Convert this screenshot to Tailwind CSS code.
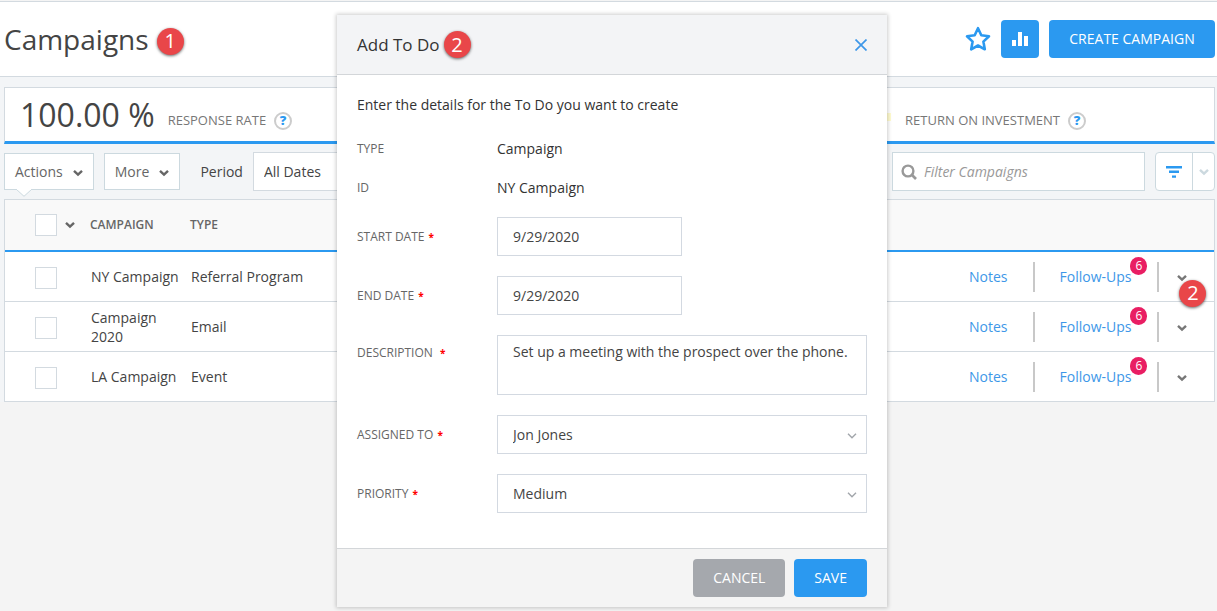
<!DOCTYPE html>
<html lang="en">
<head>
<meta charset="utf-8">
<meta name="viewport" content="width=device-width, initial-scale=1">
<title>Campaigns</title>
<script src="https://cdn.jsdelivr.net/npm/@tailwindcss/browser@4"></script>
</head>
<body class="relative min-h-screen bg-[#f4f4f4] font-['Open_Sans',sans-serif] text-sm text-[#444]">
<svg class="hidden">
  <symbol id="chevron" viewBox="0 0 10 8"><path d="M1 1.8 5 5.6 9 1.8" fill="none" stroke="currentColor" stroke-width="2.4"/></symbol>
  <symbol id="chevron-thin" viewBox="0 0 10 6"><path d="M1 .8 5 4.8 9 .8" fill="none" stroke="currentColor" stroke-width="1.4"/></symbol>
</svg>

<header class="mt-px flex h-[76px] items-center justify-between border-y border-[#d3dae0] bg-white pr-0.5 pl-1">
  <div class="flex items-center gap-2">
    <h1 class="text-[28px] leading-9">Campaigns</h1>
    <span class="mt-1 flex size-[27px] items-center justify-center rounded-full bg-[#e94649] text-xl leading-none text-white shadow-[0_1px_3px_rgba(0,0,0,0.6)]">1</span>
  </div>
  <div class="flex items-center gap-2.5">
    <button type="button" aria-label="Add to favorites" class="text-[#2b99f0]">
      <svg class="size-[26px]" viewBox="0 0 26 26"><path d="M13 2.2 16.3 9.3 24 10.3 18.4 15.6 19.8 23.3 13 19.5 6.2 23.3 7.6 15.6 2 10.3 9.7 9.3Z" fill="none" stroke="currentColor" stroke-width="2.6" stroke-linejoin="round"/></svg>
    </button>
    <button type="button" aria-label="Charts" class="flex size-[38px] items-center justify-center rounded bg-[#2b99f0] text-white">
      <svg class="h-[15px] w-4" viewBox="0 0 16 15"><path d="M0 8h4v6H0zM6 0h4v14H6zM12 4h4v10h-4z" fill="currentColor"/></svg>
    </button>
    <button type="button" class="h-[38px] w-[166px] rounded bg-[#2b99f0] text-white">CREATE CAMPAIGN</button>
  </div>
</header>

<main class="bg-[#f3f5f7] pt-2.5 pr-0.5 pl-1">
  <section class="flex h-[57px] items-center justify-between border border-b-3 border-[#d3dae0] border-b-[#2b99f0] bg-white pr-32 pl-[15px]">
    <div class="flex items-center gap-[13px]">
      <span class="text-[32px] leading-10">100.00 %</span>
      <div class="mt-3 flex items-center gap-2 text-[13px] text-[#777]">RESPONSE RATE
        <button type="button" aria-label="Response rate help" class="flex size-[18px] items-center justify-center rounded-full border-2 border-[#ccc] text-[13px] leading-none font-extrabold text-[#2b99f0]">?</button>
      </div>
    </div>
    <div class="mt-3 flex items-center gap-2 text-[13px] text-[#777]">
      <span class="mr-1.5 mb-2 h-2 w-2.5 bg-[#fffbcf]"></span>RETURN ON INVESTMENT
      <button type="button" aria-label="Return on investment help" class="flex size-[18px] items-center justify-center rounded-full border-2 border-[#ccc] text-[13px] leading-none font-extrabold text-[#2b99f0]">?</button>
    </div>
  </section>

  <div class="flex h-[55px] items-center justify-between">
    <div class="flex items-center">
      <button type="button" class="relative flex h-[37px] items-center gap-2.5 border border-[#ccd9df] bg-white px-2.5 text-[#666]">Actions
        <svg class="mt-0.5 h-2 w-2.5"><use href="#chevron"/></svg>
        <svg class="absolute top-[35px] left-[11px] h-2 w-4" viewBox="0 0 16 8"><path d="M0 0 8 7.3 16 0" fill="#fff" stroke="#ccd9df"/><path d="M1 0h14" stroke="#fff" stroke-width="2"/></svg>
      </button>
      <button type="button" class="ml-2.5 flex h-[37px] items-center gap-2.5 border border-[#ccd9df] bg-white px-2.5 text-[#666]">More
        <svg class="mt-0.5 h-2 w-2.5"><use href="#chevron"/></svg>
      </button>
      <label for="period" class="ml-5">Period</label>
      <select id="period" class="ml-2.5 h-[39px] w-48 appearance-none border border-[#d3dae0] bg-white px-2.5"><option>All Dates</option></select>
    </div>
    <div class="flex items-center gap-2.5">
      <label class="flex h-[39px] w-[253px] items-center gap-[7px] border border-[#ccd9df] bg-white px-2 text-[#999]">
        <svg class="size-4" viewBox="0 0 16 16"><circle cx="7" cy="7" r="5.4" fill="none" stroke="currentColor" stroke-width="2.4"/><path d="m11 11 4 4" stroke="currentColor" stroke-width="2.6"/></svg>
        <input type="text" aria-label="Filter campaigns" placeholder="Filter Campaigns" class="min-w-0 flex-1 italic outline-none placeholder:text-[#999]">
      </label>
      <div class="flex h-[39px] w-[60px] rounded border border-[#ccd9df] bg-white">
        <button type="button" aria-label="Filters" class="flex flex-1 items-center justify-center border-r border-[#ccd9df] text-[#2b99f0]">
          <svg class="h-3 w-4" viewBox="0 0 16 12"><path d="M0 0h16v2.4H0zM3 4.6h10V7H3zM6 9.4h4v2.4H6z" fill="currentColor"/></svg>
        </button>
        <button type="button" aria-label="Filter options" class="flex w-[21px] items-center justify-center text-[#ccd9df]"><svg class="h-2 w-2.5"><use href="#chevron"/></svg></button>
      </div>
    </div>
  </div>

  <div class="border border-b-0 border-[#d3dae0] bg-white">
    <table class="w-full table-fixed border-separate border-spacing-0 text-left">
      <colgroup><col class="w-[80px]"><col class="w-[100px]"><col><col class="w-[280px]"></colgroup>
      <thead class="bg-[#f9f9f9] text-xs text-[#666]">
        <tr class="h-[52px]">
          <th class="border-b-2 border-[#2b99f0] p-0 pl-[30px]"><div class="flex items-center gap-2"><input type="checkbox" aria-label="Select all campaigns" class="size-[22px] appearance-none border border-[#d3dae0] bg-white"><svg class="h-2 w-2.5 shrink-0"><use href="#chevron"/></svg></div></th>
          <th class="border-b-2 border-[#2b99f0] p-0 pl-[5px] font-semibold">CAMPAIGN</th>
          <th class="border-b-2 border-[#2b99f0] p-0 pl-[5px] font-semibold">TYPE</th>
          <th class="border-b-2 border-[#2b99f0] p-0"></th>
        </tr>
      </thead>
      <tbody>
        <tr class="h-[50px]">
          <td class="border-b border-[#d3dae0] p-0 pt-0.5 pl-[30px]"><input type="checkbox" aria-label="Select NY Campaign" class="block size-[22px] appearance-none border border-[#d3dae0]"></td>
          <td class="border-b border-[#d3dae0] p-0 pl-1.5 leading-[19px]">NY Campaign</td>
          <td class="border-b border-[#d3dae0] p-0 pl-1.5">Referral Program</td>
          <td class="border-b border-[#d3dae0] p-0 pl-[35px]"><div class="flex items-center text-[#3d97e8]"><a href="#notes-1">Notes</a><span class="mx-[25px] h-[30px] w-0.5 bg-[#c8c8c8]"></span><a href="#follow-1" class="relative whitespace-nowrap">Follow-Ups<span class="absolute -top-2.5 -right-4 flex h-[18px] w-[17px] items-center justify-center rounded-full bg-[#e91e63] text-xs leading-none text-white">6</span></a><span class="mr-[18px] ml-[26px] h-[30px] w-0.5 bg-[#c8c8c8]"></span>
            <button type="button" aria-label="NY Campaign actions" class="relative mt-0.5 text-[#777]"><svg class="h-2 w-2.5"><use href="#chevron"/></svg><span class="absolute top-1.5 left-0.5 z-10 flex size-[27px] items-center justify-center rounded-full bg-[#e94649] text-xl leading-none text-white shadow-[0_1px_3px_rgba(0,0,0,0.6)]">2</span></button></div></td>
        </tr>
        <tr class="h-[50px]">
          <td class="border-b border-[#d3dae0] p-0 pt-0.5 pl-[30px]"><input type="checkbox" aria-label="Select Campaign 2020" class="block size-[22px] appearance-none border border-[#d3dae0]"></td>
          <td class="border-b border-[#d3dae0] p-0 pl-1.5 leading-[19px]">Campaign 2020</td>
          <td class="border-b border-[#d3dae0] p-0 pl-1.5">Email</td>
          <td class="border-b border-[#d3dae0] p-0 pl-[35px]"><div class="flex items-center text-[#3d97e8]"><a href="#notes-2">Notes</a><span class="mx-[25px] h-[30px] w-0.5 bg-[#c8c8c8]"></span><a href="#follow-2" class="relative whitespace-nowrap">Follow-Ups<span class="absolute -top-2.5 -right-4 flex h-[18px] w-[17px] items-center justify-center rounded-full bg-[#e91e63] text-xs leading-none text-white">6</span></a><span class="mr-[18px] ml-[26px] h-[30px] w-0.5 bg-[#c8c8c8]"></span>
            <button type="button" aria-label="Campaign 2020 actions" class="mt-0.5 text-[#777]"><svg class="h-2 w-2.5"><use href="#chevron"/></svg></button></div></td>
        </tr>
        <tr class="h-[50px]">
          <td class="border-b border-[#d3dae0] p-0 pt-0.5 pl-[30px]"><input type="checkbox" aria-label="Select LA Campaign" class="block size-[22px] appearance-none border border-[#d3dae0]"></td>
          <td class="border-b border-[#d3dae0] p-0 pl-1.5 leading-[19px]">LA Campaign</td>
          <td class="border-b border-[#d3dae0] p-0 pl-1.5">Event</td>
          <td class="border-b border-[#d3dae0] p-0 pl-[35px]"><div class="flex items-center text-[#3d97e8]"><a href="#notes-3">Notes</a><span class="mx-[25px] h-[30px] w-0.5 bg-[#c8c8c8]"></span><a href="#follow-3" class="relative whitespace-nowrap">Follow-Ups<span class="absolute -top-2.5 -right-4 flex h-[18px] w-[17px] items-center justify-center rounded-full bg-[#e91e63] text-xs leading-none text-white">6</span></a><span class="mr-[18px] ml-[26px] h-[30px] w-0.5 bg-[#c8c8c8]"></span>
            <button type="button" aria-label="LA Campaign actions" class="mt-0.5 text-[#777]"><svg class="h-2 w-2.5"><use href="#chevron"/></svg></button></div></td>
        </tr>
      </tbody>
    </table>
  </div>
</main>

<div class="pointer-events-none absolute inset-x-0 top-0 z-20 flex justify-center pt-[15px] pl-[7px]">
  <form role="dialog" aria-labelledby="dialog-title" class="pointer-events-auto w-[550px] bg-white shadow-[0_0_4px_1px_rgba(0,0,0,0.2)]">
    <div class="flex h-[60px] items-center justify-between border-b border-[#d3d6d9] bg-[#f3f4f6] px-5">
      <div class="flex items-center gap-1">
        <h2 id="dialog-title" class="text-[17px] leading-6 text-[#333]">Add To Do</h2>
        <span class="flex size-[27px] items-center justify-center rounded-full bg-[#e94649] text-xl leading-none text-white shadow-[0_1px_3px_rgba(0,0,0,0.6)]">2</span>
      </div>
      <button type="button" aria-label="Close" class="text-[#3d97e8]"><svg class="size-3" viewBox="0 0 12 12"><path d="m.5.5 11 11m0-11-11 11" stroke="currentColor" stroke-width="1.7"/></svg></button>
    </div>
    <div class="px-5 pt-5 pb-[35px]">
      <p class="mb-[15px] leading-5 text-[#333]">Enter the details for the To Do you want to create</p>
      <dl class="mb-2.5 grid grid-cols-[140px_1fr]">
        <dt class="text-xs leading-[38px] text-[#666]">TYPE</dt><dd class="leading-[38px] text-[#333]">Campaign</dd>
        <dt class="text-xs leading-[39px] text-[#666]">ID</dt><dd class="leading-[39px] text-[#333]">NY Campaign</dd>
      </dl>
      <div class="grid grid-cols-[140px_1fr] items-center gap-y-5">
        <label for="start" class="text-xs text-[#666]">START DATE <b class="ml-px text-[10px] leading-none text-[red]">*</b></label>
        <input id="start" type="text" value="9/29/2020" class="h-[39px] w-[185px] border border-[#d3d9e1] px-[15px]">
        <label for="end" class="text-xs text-[#666]">END DATE <b class="ml-px text-[10px] leading-none text-[red]">*</b></label>
        <input id="end" type="text" value="9/29/2020" class="h-[39px] w-[185px] border border-[#d3d9e1] px-[15px]">
        <label for="description" class="self-start pt-2.5 text-xs text-[#666]">DESCRIPTION &nbsp;<b class="ml-px text-[10px] leading-none text-[red]">*</b></label>
        <textarea id="description" class="block h-[60px] w-full resize-none border border-[#d3d9e1] px-[15px] py-1.5">Set up a meeting with the prospect over the phone.</textarea>
        <label for="assigned" class="text-xs text-[#666]">ASSIGNED TO <b class="ml-px text-[10px] leading-none text-[red]">*</b></label>
        <div class="relative"><select id="assigned" class="block h-[39px] w-full appearance-none border border-[#d3d9e1] px-[15px]"><option>Jon Jones</option></select><svg class="pointer-events-none absolute top-[18px] right-2.5 h-1.5 w-2.5 text-[#a2a6ab]"><use href="#chevron-thin"/></svg></div>
        <label for="priority" class="text-xs text-[#666]">PRIORITY <b class="ml-px text-[10px] leading-none text-[red]">*</b></label>
        <div class="relative"><select id="priority" class="block h-[39px] w-full appearance-none border border-[#d3d9e1] px-[15px]"><option>Medium</option></select><svg class="pointer-events-none absolute top-[18px] right-2.5 h-1.5 w-2.5 text-[#a2a6ab]"><use href="#chevron-thin"/></svg></div>
      </div>
    </div>
    <div class="flex h-[59px] items-center justify-end gap-[9px] border-t border-[#d3d6d9] bg-[#f4f4f4] px-5">
      <button type="button" class="h-[38px] rounded bg-[#a5a8ad] px-5 text-white">CANCEL</button>
      <button type="submit" class="h-[38px] rounded bg-[#2b99f0] px-5 text-white">SAVE</button>
    </div>
  </form>
</div>
</body>
</html>
